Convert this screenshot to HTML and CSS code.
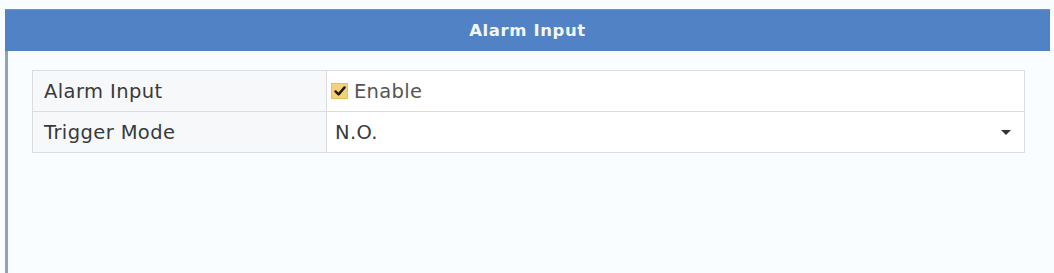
FILE: index.html
```html
<!DOCTYPE html>
<html>
<head>
<meta charset="utf-8">
<link rel="stylesheet" href="styles.css">
</head>
<body>
<div class="panel">
  <div class="header">Alarm Input</div>
  <div class="content">
    <div class="table">
      <div class="row">
        <div class="label">Alarm Input</div>
        <div class="value">
          <span class="check">
            <svg width="14" height="14" viewBox="0 0 14 14"><path d="M2.5 7.4 L5.6 10.4 L11.6 3.4" fill="none" stroke="#1a1a1a" stroke-width="2.4" stroke-linecap="round" stroke-linejoin="round"/></svg>
          </span>
          <span class="enable">Enable</span>
        </div>
      </div>
      <div class="row">
        <div class="label">Trigger Mode</div>
        <div class="value select">
          <span>N.O.</span>
          <span class="caret"></span>
        </div>
      </div>
    </div>
  </div>
</div>
</body>
</html>
```
FILE: styles.css
```css
html, body {
  margin: 0;
  padding: 0;
  background: #f9fdff;
  font-family: "DejaVu Sans", Verdana, sans-serif;
}
.panel {
  margin: 9px 4px 0 5px;
  height: 264px;
  display: flex;
  flex-direction: column;
}
.header {
  height: 41px;
  background: #5282c6;
  color: #f2f6fb;
  font-weight: bold;
  font-size: 16.5px;
  letter-spacing: 0.6px;
  display: flex;
  align-items: center;
  justify-content: center;
  border-top: 1px solid #6d93cb;
}
.content {
  flex: 1;
  border-left: 3px solid #8ea4bb;
  padding: 19px 25px 0 24px;
}
.table {
  border: 1px solid #d9dde0;
  background: #fff;
}
.row {
  display: flex;
  height: 40px;
}
.row + .row {
  border-top: 1px solid #d9dde0;
}
.label {
  width: 282px;
  padding-left: 11px;
  background: #f6f8f9;
  border-right: 1px solid #d9dde0;
  display: flex;
  align-items: center;
  font-size: 19.5px;
  letter-spacing: 0.4px;
  color: #3a3a3a;
}
.value {
  flex: 1;
  display: flex;
  align-items: center;
  padding-left: 4px;
  font-size: 19.5px;
  letter-spacing: 0.3px;
  color: #3a3a3a;
}
.check {
  width: 17px;
  height: 16px;
  box-sizing: border-box;
  background: #f3d27a;
  border: 1px solid #e6c15e;
  display: flex;
  align-items: center;
  justify-content: center;
  margin-right: 6px;
}
.check svg {
  display: block;
}
.enable {
  color: #555;
}
.select {
  justify-content: space-between;
  padding-left: 8px;
  padding-right: 13px;
}
.caret {
  width: 0;
  height: 0;
  border-left: 5px solid transparent;
  border-right: 5px solid transparent;
  border-top: 5px solid #333;
}
```
